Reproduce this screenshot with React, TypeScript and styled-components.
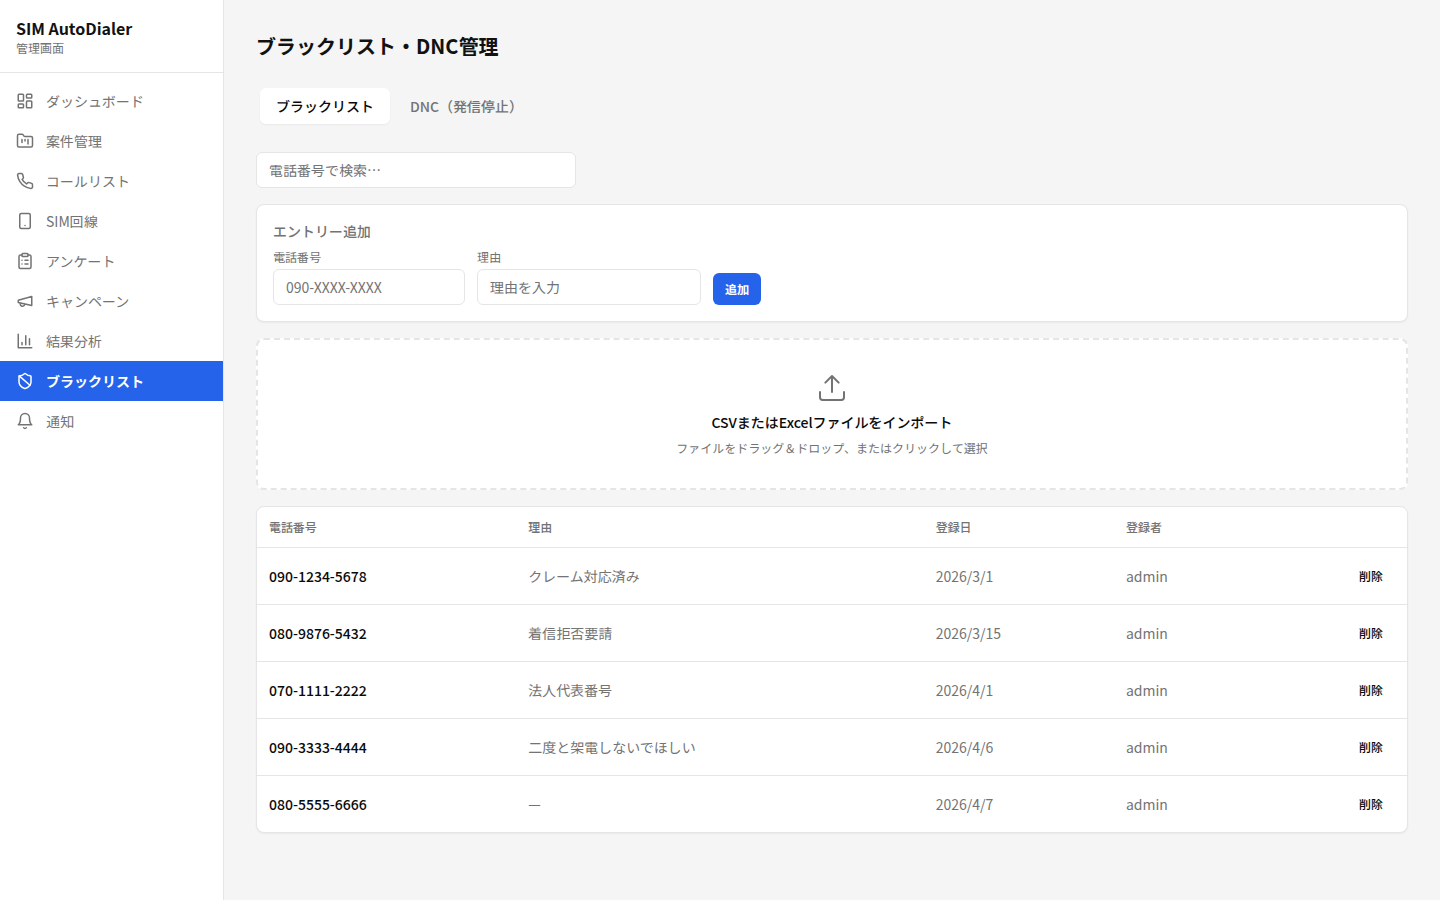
import React from "react";
import styled, { createGlobalStyle } from "styled-components";

const GlobalStyle = createGlobalStyle`
  *, *::before, *::after { box-sizing: border-box; }
  html, body { margin: 0; padding: 0; }
  body {
    background: #f5f5f5;
    color: #111;
    font-family: "Noto Sans JP", "Noto Sans CJK JP", sans-serif;
    font-size: 14px;
    line-height: 20px;
  }
  button, input { font: inherit; color: inherit; margin: 0; }
`;

const Shell = styled.div`
  display: flex;
  min-height: 100vh;
`;

const Sidebar = styled.aside`
  width: 224px;
  flex-shrink: 0;
  background: #fff;
  border-right: 1px solid #e5e5e5;
`;

const Brand = styled.div`
  padding: 16px;
  border-bottom: 1px solid #e5e5e5;
`;

const BrandName = styled.div`
  font-size: 16px;
  line-height: 24px;
  font-weight: 700;
`;

const BrandNote = styled.div`
  font-size: 12px;
  line-height: 16px;
  color: #737373;
`;

const Nav = styled.nav`
  display: flex;
  flex-direction: column;
  padding: 8px 0;
`;

const NavItem = styled.a<{ $active?: boolean }>`
  display: flex;
  align-items: center;
  gap: 12px;
  height: 40px;
  padding: 0 16px;
  color: ${(p) => (p.$active ? "#fff" : "#737373")};
  background: ${(p) => (p.$active ? "#2563eb" : "transparent")};
  font-weight: ${(p) => (p.$active ? 700 : 400)};
  text-decoration: none;
`;

const Icon = styled.svg<{ $size: number }>`
  display: block;
  width: ${(p) => p.$size}px;
  height: ${(p) => p.$size}px;
  flex-shrink: 0;
  fill: none;
  stroke: currentColor;
  stroke-linecap: round;
  stroke-linejoin: round;
`;

const Main = styled.main`
  flex: 1;
  min-width: 0;
  padding: 32px;
`;

const Title = styled.h1`
  margin: 0 0 24px;
  font-size: 20px;
  line-height: 28px;
  font-weight: 700;
`;

const Tabs = styled.div`
  display: flex;
  gap: 4px;
  padding: 4px;
  margin-bottom: 24px;
`;

const Tab = styled.button<{ $active?: boolean }>`
  height: 36px;
  padding: 0 16px;
  border: 0;
  border-radius: 6px;
  font-weight: 500;
  color: ${(p) => (p.$active ? "#0a0a0a" : "#737373")};
  background: ${(p) => (p.$active ? "#fff" : "transparent")};
  box-shadow: ${(p) => (p.$active ? "0 1px 2px rgba(0, 0, 0, 0.05)" : "none")};
`;

const Stack = styled.div`
  display: flex;
  flex-direction: column;
  gap: 16px;
`;

const Input = styled.input<{ $width: number }>`
  display: block;
  width: ${(p) => p.$width}px;
  height: 36px;
  padding: 0 12px;
  border: 1px solid #e5e5e5;
  border-radius: 6px;
  background: #fff;
  &::placeholder { color: #737373; opacity: 1; }
`;

const Card = styled.section`
  background: #fff;
  border: 1px solid #e5e5e5;
  border-radius: 8px;
  box-shadow: 0 1px 2px rgba(0, 0, 0, 0.05);
`;

const FormCard = styled(Card)`
  padding: 16px;
`;

const CardTitle = styled.h2`
  margin: 0 0 8px;
  font-size: 14px;
  line-height: 20px;
  font-weight: 500;
  color: #737373;
`;

const FormRow = styled.div`
  display: flex;
  align-items: flex-end;
  gap: 12px;
`;

const Field = styled.label`
  display: flex;
  flex-direction: column;
  gap: 4px;
`;

const FieldLabel = styled.span`
  font-size: 12px;
  line-height: 16px;
  color: #737373;
`;

const AddButton = styled.button`
  height: 32px;
  padding: 0 12px;
  border: 0;
  border-radius: 6px;
  background: #2563eb;
  color: #fff;
  font-size: 12px;
  line-height: 16px;
  font-weight: 700;
`;

const DropZone = styled.div`
  display: flex;
  flex-direction: column;
  align-items: center;
  gap: 8px;
  padding: 32px;
  border: 2px dashed #e5e5e5;
  border-radius: 8px;
  background: #fff;
  color: #737373;
`;

const DropTitle = styled.div`
  font-weight: 500;
  color: #0a0a0a;
`;

const DropNote = styled.div`
  font-size: 12px;
  line-height: 16px;
`;

const Table = styled.table`
  width: 100%;
  table-layout: fixed;
  border-collapse: separate;
  border-spacing: 0;
`;

const Row = styled.tr``;

const HeadCell = styled.th<{ $width?: number }>`
  width: ${(p) => (p.$width ? `${p.$width}px` : "auto")};
  height: 41px;
  padding: 0 12px;
  border-bottom: 1px solid #e5e5e5;
  text-align: left;
  font-size: 12px;
  line-height: 16px;
  font-weight: 500;
  color: #737373;
`;

const Cell = styled.td<{ $strong?: boolean; $end?: boolean }>`
  height: 57px;
  padding: 0 12px;
  border-bottom: 1px solid #e5e5e5;
  text-align: ${(p) => (p.$end ? "right" : "left")};
  font-weight: ${(p) => (p.$strong ? 500 : 400)};
  color: ${(p) => (p.$strong ? "#0a0a0a" : "#737373")};
  ${Row}:last-child > & {
    height: 56px;
    border-bottom: 0;
  }
`;

const DeleteButton = styled.button`
  height: 32px;
  padding: 0 12px;
  border: 0;
  border-radius: 6px;
  background: transparent;
  color: #0a0a0a;
  font-size: 12px;
  line-height: 16px;
  font-weight: 500;
`;

interface NavEntry {
  label: string;
  icon: React.ReactNode;
  active?: boolean;
}

const navEntries: NavEntry[] = [
  {
    label: "ダッシュボード",
    icon: (
      <>
        <rect width="7" height="9" x="3" y="3" rx="1" />
        <rect width="7" height="5" x="14" y="3" rx="1" />
        <rect width="7" height="9" x="14" y="12" rx="1" />
        <rect width="7" height="5" x="3" y="16" rx="1" />
      </>
    ),
  },
  {
    label: "案件管理",
    icon: (
      <>
        <path d="M4 20h16a2 2 0 0 0 2-2V8a2 2 0 0 0-2-2h-7.93a2 2 0 0 1-1.66-.9l-.82-1.2A2 2 0 0 0 7.93 3H4a2 2 0 0 0-2 2v13c0 1.1.9 2 2 2Z" />
        <path d="M8 10v4M12 10v2M16 10v6" />
      </>
    ),
  },
  {
    label: "コールリスト",
    icon: (
      <path d="M22 16.92v3a2 2 0 0 1-2.18 2 19.79 19.79 0 0 1-8.63-3.07 19.5 19.5 0 0 1-6-6 19.79 19.79 0 0 1-3.07-8.67A2 2 0 0 1 4.11 2h3a2 2 0 0 1 2 1.72 12.84 12.84 0 0 0 .7 2.81 2 2 0 0 1-.45 2.11L8.09 9.91a16 16 0 0 0 6 6l1.27-1.27a2 2 0 0 1 2.11-.45 12.84 12.84 0 0 0 2.81.7A2 2 0 0 1 22 16.92z" />
    ),
  },
  {
    label: "SIM回線",
    icon: (
      <>
        <rect width="14" height="20" x="5" y="2" rx="2" />
        <path d="M12 18h.01" />
      </>
    ),
  },
  {
    label: "アンケート",
    icon: (
      <>
        <rect width="8" height="4" x="8" y="2" rx="1" />
        <path d="M16 4h2a2 2 0 0 1 2 2v14a2 2 0 0 1-2 2H6a2 2 0 0 1-2-2V6a2 2 0 0 1 2-2h2" />
        <path d="M12 11h4M12 16h4M8 11h.01M8 16h.01" />
      </>
    ),
  },
  {
    label: "キャンペーン",
    icon: (
      <>
        <path d="m3 11 18-5v12L3 14v-3z" />
        <path d="M11.6 16.8a3 3 0 1 1-5.8-1.6" />
      </>
    ),
  },
  {
    label: "結果分析",
    icon: <path d="M3 3v18h18M18 17V9M13 17V5M8 17v-3" />,
  },
  {
    label: "ブラックリスト",
    active: true,
    icon: (
      <>
        <path d="M20 13c0 5-3.5 7.5-7.66 8.95a1 1 0 0 1-.67-.01C7.5 20.5 4 18 4 13V6a1 1 0 0 1 1-1c2 0 4.5-1.2 6.24-2.72a1.17 1.17 0 0 1 1.52 0C14.51 3.81 17 5 19 5a1 1 0 0 1 1 1z" />
        <path d="m4.243 5.21 14.39 12.472" />
      </>
    ),
  },
  {
    label: "通知",
    icon: (
      <>
        <path d="M6 8a6 6 0 0 1 12 0c0 7 3 9 3 9H3s3-2 3-9" />
        <path d="M10.3 21a1.94 1.94 0 0 0 3.4 0" />
      </>
    ),
  },
];

const entries = [
  { phone: "090-1234-5678", reason: "クレーム対応済み", date: "2026/3/1", by: "admin" },
  { phone: "080-9876-5432", reason: "着信拒否要請", date: "2026/3/15", by: "admin" },
  { phone: "070-1111-2222", reason: "法人代表番号", date: "2026/4/1", by: "admin" },
  { phone: "090-3333-4444", reason: "二度と架電しないでほしい", date: "2026/4/6", by: "admin" },
  { phone: "080-5555-6666", reason: "—", date: "2026/4/7", by: "admin" },
];

export default function App() {
  return (
    <>
      <GlobalStyle />
      <Shell lang="ja">
        <Sidebar>
          <Brand>
            <BrandName>SIM AutoDialer</BrandName>
            <BrandNote>管理画面</BrandNote>
          </Brand>
          <Nav>
            {navEntries.map((n) => (
              <NavItem key={n.label} $active={n.active}>
                <Icon $size={18} viewBox="0 0 24 24" strokeWidth={2}>
                  {n.icon}
                </Icon>
                {n.label}
              </NavItem>
            ))}
          </Nav>
        </Sidebar>
        <Main>
          <Title>ブラックリスト・DNC管理</Title>
          <Tabs>
            <Tab $active>ブラックリスト</Tab>
            <Tab>DNC（発信停止）</Tab>
          </Tabs>
          <Stack>
            <Input $width={320} placeholder="電話番号で検索…" />
            <FormCard>
              <CardTitle>エントリー追加</CardTitle>
              <FormRow>
                <Field>
                  <FieldLabel>電話番号</FieldLabel>
                  <Input $width={192} placeholder="090-XXXX-XXXX" />
                </Field>
                <Field>
                  <FieldLabel>理由</FieldLabel>
                  <Input $width={224} placeholder="理由を入力" />
                </Field>
                <AddButton>追加</AddButton>
              </FormRow>
            </FormCard>
            <DropZone>
              <Icon $size={32} viewBox="0 0 24 24" strokeWidth={1.5}>
                <path d="M21 15v4a2 2 0 0 1-2 2H5a2 2 0 0 1-2-2v-4" />
                <path d="m17 8-5-5-5 5M12 3v12" />
              </Icon>
              <DropTitle>CSVまたはExcelファイルをインポート</DropTitle>
              <DropNote>ファイルをドラッグ＆ドロップ、またはクリックして選択</DropNote>
            </DropZone>
            <Card>
              <Table>
                <thead>
                  <tr>
                    <HeadCell $width={259.2}>電話番号</HeadCell>
                    <HeadCell $width={407.5}>理由</HeadCell>
                    <HeadCell $width={190.3}>登録日</HeadCell>
                    <HeadCell>登録者</HeadCell>
                    <HeadCell $width={120} />
                  </tr>
                </thead>
                <tbody>
                  {entries.map((e) => (
                    <Row key={e.phone}>
                      <Cell $strong>{e.phone}</Cell>
                      <Cell>{e.reason}</Cell>
                      <Cell>{e.date}</Cell>
                      <Cell>{e.by}</Cell>
                      <Cell $end>
                        <DeleteButton>削除</DeleteButton>
                      </Cell>
                    </Row>
                  ))}
                </tbody>
              </Table>
            </Card>
          </Stack>
        </Main>
      </Shell>
    </>
  );
}
